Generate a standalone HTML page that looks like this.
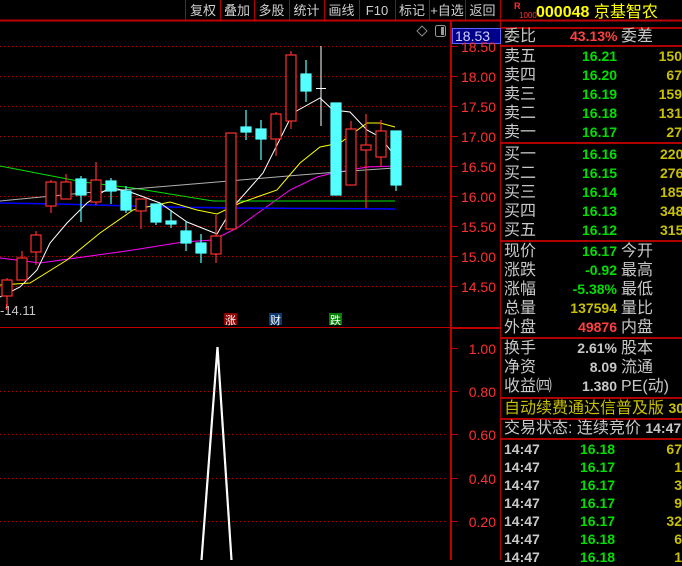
<!DOCTYPE html>
<html><head><meta charset="utf-8"><style>
*{margin:0;padding:0;box-sizing:border-box}
body{width:682px;height:560px;background:#000;overflow:hidden;position:relative;font-family:"Liberation Sans","Noto Sans CJK SC",sans-serif}
.a{position:absolute;white-space:nowrap;line-height:19px}
.btn{position:absolute;top:1px;height:19px;color:#d0d0d0;font-size:13px;line-height:19px;text-align:center}
.l{font-size:16px;color:#c8c8c8;left:504px}
.g{color:#00e000;font-size:14px;font-weight:bold}
.y{color:#c8c000;font-size:14px;font-weight:bold}
.w{color:#c8c8c8;font-size:14px;font-weight:bold}
.r{color:#ff4040;font-size:14px;font-weight:bold}
.hl{position:absolute;left:501px;width:181px;height:2px;background:#b00000}
.ax{position:absolute;color:#ff3030;font-size:14px;right:186px;line-height:14px}
</style></head><body>
<svg width="682" height="560" style="position:absolute;left:0;top:0">
<line x1="0" y1="20.5" x2="682" y2="20.5" stroke="#c00000" stroke-width="2"/>
<g stroke="#b00000" stroke-width="1">
<line x1="185.5" y1="0" x2="185.5" y2="20"/><line x1="220.5" y1="0" x2="220.5" y2="20"/><line x1="254.5" y1="0" x2="254.5" y2="20"/><line x1="289.5" y1="0" x2="289.5" y2="20"/><line x1="324.5" y1="0" x2="324.5" y2="20"/><line x1="359.5" y1="0" x2="359.5" y2="20"/><line x1="395.5" y1="0" x2="395.5" y2="20"/><line x1="429.5" y1="0" x2="429.5" y2="20"/><line x1="465.5" y1="0" x2="465.5" y2="20"/><line x1="500.5" y1="0" x2="500.5" y2="560"/>
</g>
<line x1="451" y1="20" x2="451" y2="560" stroke="#c00000" stroke-width="2"/>
<line x1="0" y1="327.5" x2="451" y2="327.5" stroke="#c00000" stroke-width="1"/>
<line x1="451" y1="328" x2="500" y2="328" stroke="#c00000" stroke-width="2"/>
<g stroke="#c00000" stroke-dasharray="1 3">
<line x1="0" y1="46.5" x2="448" y2="46.5"/><line x1="0" y1="76.5" x2="448" y2="76.5"/><line x1="0" y1="106.5" x2="448" y2="106.5"/><line x1="0" y1="136.5" x2="448" y2="136.5"/><line x1="0" y1="166.5" x2="448" y2="166.5"/><line x1="0" y1="196.5" x2="448" y2="196.5"/><line x1="0" y1="226.5" x2="448" y2="226.5"/><line x1="0" y1="256.5" x2="448" y2="256.5"/><line x1="0" y1="286.5" x2="448" y2="286.5"/>
<line x1="0" y1="391.5" x2="448" y2="391.5"/><line x1="0" y1="434.5" x2="448" y2="434.5"/><line x1="0" y1="478.5" x2="448" y2="478.5"/><line x1="0" y1="521.5" x2="448" y2="521.5"/>
</g>
<g stroke="#c00000">
<line x1="452" y1="46.5" x2="458" y2="46.5"/><line x1="452" y1="76.5" x2="458" y2="76.5"/><line x1="452" y1="106.5" x2="458" y2="106.5"/><line x1="452" y1="136.5" x2="458" y2="136.5"/><line x1="452" y1="166.5" x2="458" y2="166.5"/><line x1="452" y1="196.5" x2="458" y2="196.5"/><line x1="452" y1="226.5" x2="458" y2="226.5"/><line x1="452" y1="256.5" x2="458" y2="256.5"/><line x1="452" y1="286.5" x2="458" y2="286.5"/>
<line x1="452" y1="348.5" x2="458" y2="348.5"/><line x1="452" y1="391.5" x2="458" y2="391.5"/><line x1="452" y1="434.5" x2="458" y2="434.5"/><line x1="452" y1="478.5" x2="458" y2="478.5"/><line x1="452" y1="521.5" x2="458" y2="521.5"/>
</g>
<path d="M422 26 L427 31 L422 36 L417 31Z" fill="none" stroke="#888"/>
<rect x="435.5" y="25.5" width="10" height="11" rx="2" fill="none" stroke="#999"/><rect x="441" y="27" width="3" height="8" fill="#999"/>
<g fill="none" stroke-width="1">
<polyline stroke="#ff00ff" points="0,258 40,263 83,257 133,250 183,242 213,240 237,228 290,190 317,177 333,173 367,167 395,166"/>
<polyline stroke="#00e000" points="0,166 83,182 133,188 213,201 395,201"/>
<polyline stroke="#0000ff" stroke-width="1.5" points="0,203 57,204 167,207 233,208 395,209"/>
<polyline stroke="#b0b0b0" points="0,201 83,193 133,189 217,182 300,175 350,171 395,168"/>
<polyline stroke="#ffff00" points="0,285 30,283 67,260 100,233 133,210 170,202 197,210 217,214 240,203 277,190 300,163 320,147 340,143 367,123 380,123 395,127"/>
<polyline stroke="#ffffff" points="0,297 20,287 37,270 50,243 67,223 87,203 110,187 133,193 160,203 187,222 217,234 233,207 263,173 283,133 293,113 320,98 333,110 350,112 367,130 380,137 395,156"/>
</g>
<g stroke="#ff3030" fill="#000" stroke-width="1.2">
<line x1="7" y1="278" x2="7" y2="306"/><rect x="2" y="280" width="10" height="16"/>
<line x1="22" y1="251" x2="22" y2="258"/><rect x="17" y="258" width="10" height="22"/>
<line x1="36" y1="231" x2="36" y2="265"/><rect x="31" y="235" width="10" height="17"/>
<line x1="51" y1="180" x2="51" y2="213"/><rect x="46" y="182" width="10" height="24"/>
<line x1="66" y1="174" x2="66" y2="182"/><rect x="61" y="182" width="10" height="17"/>
<line x1="96" y1="162" x2="96" y2="205"/><rect x="91" y="180" width="10" height="22"/>
<line x1="141" y1="211" x2="141" y2="229"/><rect x="136" y="199" width="10" height="12"/>
<line x1="216" y1="215" x2="216" y2="263"/><rect x="211" y="236" width="10" height="18"/>
<rect x="226" y="133" width="10" height="96"/>
<line x1="276" y1="112" x2="276" y2="156"/><rect x="271" y="114" width="10" height="25"/>
<line x1="291" y1="51" x2="291" y2="129"/><rect x="286" y="55" width="10" height="66"/>
<line x1="351" y1="121" x2="351" y2="129"/><rect x="346" y="129" width="10" height="56"/>
<line x1="366" y1="114" x2="366" y2="208"/><rect x="361" y="145" width="10" height="5"/>
<line x1="381" y1="120" x2="381" y2="167"/><rect x="376" y="131" width="10" height="26"/>
</g>
<g stroke="#55ffff" fill="#55ffff" stroke-width="1.2">
<line x1="81" y1="176" x2="81" y2="222"/><rect x="76" y="179" width="10" height="16"/>
<line x1="111" y1="178" x2="111" y2="204"/><rect x="106" y="181" width="10" height="10"/>
<line x1="126" y1="186" x2="126" y2="213"/><rect x="121" y="191" width="10" height="19"/>
<line x1="156" y1="204" x2="156" y2="225"/><rect x="151" y="204" width="10" height="18"/>
<line x1="171" y1="210" x2="171" y2="228"/><rect x="166" y="221" width="10" height="3"/>
<line x1="186" y1="221" x2="186" y2="251"/><rect x="181" y="231" width="10" height="12"/>
<line x1="201" y1="234" x2="201" y2="263"/><rect x="196" y="243" width="10" height="10"/>
<line x1="246" y1="110" x2="246" y2="140"/><rect x="241" y="127" width="10" height="5"/>
<line x1="261" y1="120" x2="261" y2="160"/><rect x="256" y="129" width="10" height="10"/>
<line x1="306" y1="60" x2="306" y2="102"/><rect x="301" y="74" width="10" height="17"/>
<rect x="331" y="103" width="10" height="92"/>
<line x1="396" y1="131" x2="396" y2="191"/><rect x="391" y="131" width="10" height="54"/>
</g>
<line x1="321" y1="46" x2="321" y2="126" stroke="#fff"/><line x1="316" y1="88.5" x2="326" y2="88.5" stroke="#fff"/>
<line x1="6.5" y1="304" x2="6.5" y2="310" stroke="#ff3030"/>
<rect x="224" y="313" width="13" height="12" fill="#8b0000"/><rect x="269" y="313" width="13" height="12" fill="#0a3a70"/><rect x="329" y="313" width="13" height="12" fill="#008000"/>
<text x="225" y="324" font-size="11" fill="#fff" font-family="Noto Sans CJK SC">涨</text>
<text x="270" y="324" font-size="11" fill="#fff" font-family="Noto Sans CJK SC">财</text>
<text x="330" y="324" font-size="11" fill="#fff" font-family="Noto Sans CJK SC">跌</text>
<polyline fill="none" stroke="#fff" stroke-width="1.2" points="201,560 217,347 231,560"/>
<polyline fill="none" stroke="#fff" stroke-width="1.2" points="202,560 218,347 232,560"/>
</svg>
<div class="btn" style="left:186px;width:34px">复权</div>
<div class="btn" style="left:220px;width:34px">叠加</div>
<div class="btn" style="left:254px;width:35px">多股</div>
<div class="btn" style="left:289px;width:35px">统计</div>
<div class="btn" style="left:324px;width:35px">画线</div>
<div class="btn" style="left:359px;width:36px">F10</div>
<div class="btn" style="left:395px;width:34px">标记</div>
<div class="btn" style="left:429px;width:36px">+自选</div>
<div class="btn" style="left:465px;width:35px">返回</div>
<div class="a" style="left:452px;top:28px;width:49px;height:16px;background:#00008b;border:1px solid #6060ff;color:#d0d0ff;font-size:14px;line-height:14px;padding-left:2px">18.53</div>
<div class="a" style="left:0;top:304px;color:#c8c8c8;font-size:13px;line-height:14px">-14.11</div>
<div class="ax" style="top:40px">18.50</div><div class="ax" style="top:70px">18.00</div><div class="ax" style="top:100px">17.50</div><div class="ax" style="top:130px">17.00</div><div class="ax" style="top:160px">16.50</div><div class="ax" style="top:190px">16.00</div><div class="ax" style="top:220px">15.50</div><div class="ax" style="top:250px">15.00</div><div class="ax" style="top:280px">14.50</div>
<div class="ax" style="top:342px">1.00</div><div class="ax" style="top:385px">0.80</div><div class="ax" style="top:428px">0.60</div><div class="ax" style="top:472px">0.40</div><div class="ax" style="top:515px">0.20</div>
<div class="a" style="left:514px;top:2px;color:#ff3030;font-size:9px;line-height:9px;font-weight:bold">R</div>
<div class="a" style="left:519px;top:11px;color:#ff3030;font-size:8px;line-height:9px">1000</div>
<div class="a" style="left:536px;top:3px;color:#ffff00;font-size:16px;line-height:20px"><b>000048</b> 京基智农</div>
<div class="hl" style="top:27px"></div>
<div class="a l" style="top:27px">委比</div><div class="a r" style="left:570px;top:27px;width:47px;text-align:right">43.13%</div><div class="a l" style="left:621px;top:27px">委差</div>
<div class="hl" style="top:45px"></div>
<div class="a l" style="top:47px;line-height:19px">卖五<br>卖四<br>卖三<br>卖二<br>卖一</div>
<div class="a g" style="left:582px;top:47px">16.21<br>16.20<br>16.19<br>16.18<br>16.17</div>
<div class="a y" style="left:640px;top:47px;width:42px;text-align:right">150<br>&nbsp;67<br>159<br>131<br>&nbsp;27</div>
<div class="hl" style="top:142px"></div>
<div class="a l" style="top:145px">买一<br>买二<br>买三<br>买四<br>买五</div>
<div class="a g" style="left:582px;top:145px">16.16<br>16.15<br>16.14<br>16.13<br>16.12</div>
<div class="a y" style="left:640px;top:145px;width:45px;text-align:left;padding-left:20px">220<br>276<br>185<br>348<br>315</div>
<div class="hl" style="top:240px"></div>
<div class="a l" style="top:242px">现价<br>涨跌<br>涨幅<br>总量<br>外盘</div>
<div class="a" style="left:560px;top:242px;width:57px;text-align:right;font-size:14px;font-weight:bold;line-height:19px"><span style="color:#00e000">16.17</span><br><span style="color:#00e000">-0.92</span><br><span style="color:#00e000">-5.38%</span><br><span style="color:#c8c000">137594</span><br><span style="color:#ff4040">49876</span></div>
<div class="a l" style="left:621px;top:242px">今开<br>最高<br>最低<br>量比<br>内盘</div>
<div class="hl" style="top:337px"></div>
<div class="a l" style="top:339px">换手<br>净资<br>收益㈣</div>
<div class="a w" style="left:560px;top:339px;width:57px;text-align:right">2.61%<br>8.09<br>1.380</div>
<div class="a l" style="left:621px;top:339px">股本<br>流通<br>PE(动)</div>
<div class="hl" style="top:397px"></div>
<div class="a" style="left:504px;top:399px;color:#c8c000;font-size:16px">自动续费通达信普及版 <b style="font-size:14px">30</b></div>
<div class="hl" style="top:418px"></div>
<div class="a l" style="top:419px">交易状态: 连续竞价 <b style="font-size:14px">14:47:</b></div>
<div class="hl" style="top:438px"></div>
<div class="a w" style="left:504px;top:440px;line-height:18px">14:47<br>14:47<br>14:47<br>14:47<br>14:47<br>14:47<br>14:47</div>
<div class="a g" style="left:580px;top:440px;line-height:18px">16.18<br>16.17<br>16.17<br>16.17<br>16.17<br>16.18<br>16.18</div>
<div class="a y" style="left:640px;top:440px;width:42px;text-align:right;line-height:18px">67<br>1<br>3<br>9<br>32<br>6<br>1</div>
</body></html>
